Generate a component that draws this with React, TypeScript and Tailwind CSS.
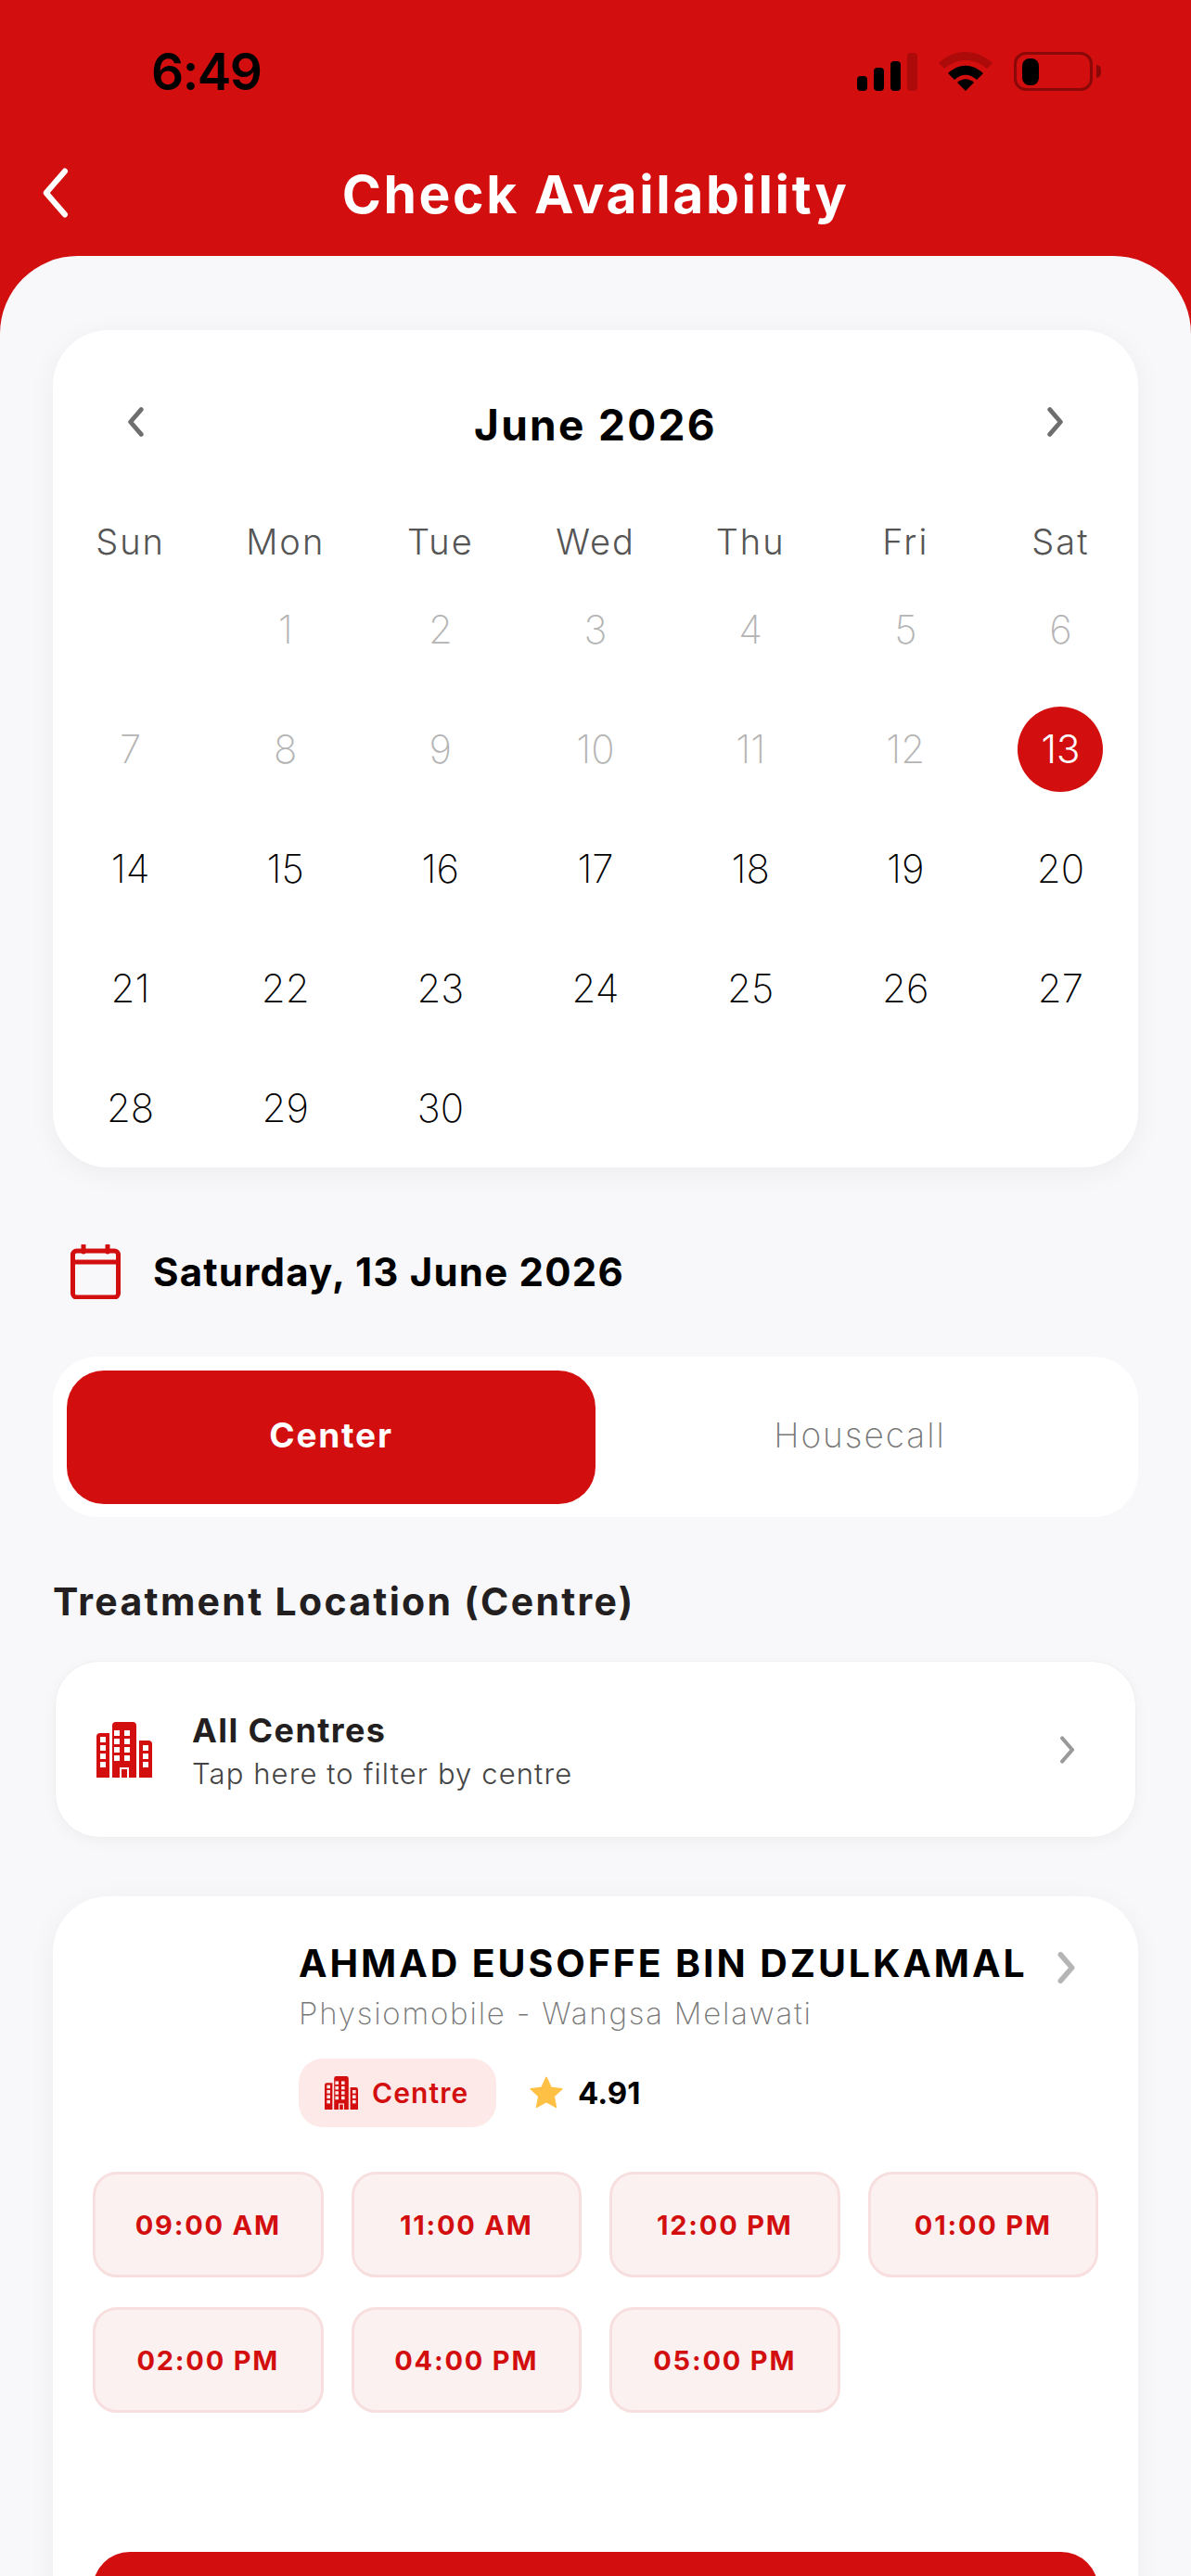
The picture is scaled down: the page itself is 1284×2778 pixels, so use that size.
import React from 'react';

const weekDays = ['Sun', 'Mon', 'Tue', 'Wed', 'Thu', 'Fri', 'Sat'];
const slots = ['09:00 AM', '11:00 AM', '12:00 PM', '01:00 PM', '02:00 PM', '04:00 PM', '05:00 PM'];
const days = [0, ...Array.from({ length: 30 }, (_, i) => i + 1)];

const Chevron = ({ left, weight = 4, className }: { left?: boolean; weight?: number; className: string }) => (
  <svg viewBox="0 0 20 36" fill="none" className={className}>
    <path
      d={left ? 'M17 3 L4 18 L17 33' : 'M3 3 L16 18 L3 33'}
      stroke="currentColor"
      strokeWidth={weight}
      strokeLinecap="round"
      strokeLinejoin="round"
    />
  </svg>
);

const Building = ({ className, hole }: { className: string; hole: string }) => {
  const windows: [number, number][] = [];
  [21, 32].forEach((x) => [9, 18, 27, 36].forEach((y) => windows.push([x, y])));
  [16, 25, 34, 43].forEach((y) => windows.push([6, y]));
  [25, 34, 43].forEach((y) => windows.push([52, y]));
  return (
    <svg viewBox="0 0 60 60" className={className}>
      <path d="M0 16 Q0 12 4 12 H14 V60 H0 Z" fill="currentColor" />
      <path d="M17 4 Q17 0 21 0 H39 Q43 0 43 4 V60 H17 Z" fill="currentColor" />
      <path d="M46 20 H56 Q60 20 60 24 V60 H46 Z" fill="currentColor" />
      {windows.map(([x, y]) => (
        <rect key={`${x}-${y}`} x={x - 2} y={y} width="6" height="6" className={hole} />
      ))}
      <rect x="25" y="49" width="10" height="11" className={hole} />
      <rect x="27" y="51" width="6" height="9" fill="currentColor" />
    </svg>
  );
};

const StatusBar = () => (
  <div className="flex h-[154px] items-center justify-between pl-[163px] pr-[97px]">
    <span className="text-[55px] font-semibold leading-none text-black tracking-[-1.5px]">6:49</span>
    <div className="flex items-center">
      <svg viewBox="0 0 65 41" className="h-[41px] w-[65px]">
        <rect x="0" y="25" width="11" height="16" rx="4" fill="#000" />
        <rect x="18" y="16" width="11" height="25" rx="4" fill="#000" />
        <rect x="36" y="9" width="11" height="32" rx="4" fill="#000" />
        <rect x="54" y="0" width="11" height="41" rx="4" fill="#ad0a0a" />
      </svg>
      <svg viewBox="0 0 58 42" className="ml-[23px] h-[42px] w-[58px]">
        <path d="M0 12 C17 -4 41 -4 58 12 L52 18 C38 6 20 6 6 18 Z" fill="#ad0a0a" />
        <path d="M10 23 C22 12 36 12 48 23 L41 30 C33 23 25 23 17 30 Z" fill="#000" />
        <path d="M20 33 C26 28 32 28 38 33 L29 42 Z" fill="#000" />
      </svg>
      <div className="ml-[23px] flex items-center">
        <div className="flex h-[42px] w-[85px] items-center rounded-[13px] border-[3px] border-[#8a0808] pl-[6px]">
          <div className="h-[29px] w-[18px] rounded-[8px] bg-black" />
        </div>
        <div className="ml-[4px] h-[14px] w-[5px] rounded-r-full bg-[#8a0808]" />
      </div>
    </div>
  </div>
);

export default function App() {
  return (
    <div className="h-[2778px] w-[1284px] overflow-hidden bg-[#d20e0e] font-['Inter',sans-serif]">
      <StatusBar />

      <header className="relative flex h-[122px] items-start justify-center pt-[27px]">
        <Chevron left className="absolute left-[43px] top-[26px] h-[56px] w-[32px] text-white" />
        <h1 className="text-[57px] font-bold leading-none tracking-[2.6px] text-white">Check Availability</h1>
      </header>

      <main className="h-[2502px] rounded-t-[84px] bg-[#f8f8fb] px-[57px] pt-[80px]">
        <section className="rounded-[60px] bg-white shadow-[0_6px_30px_rgba(0,0,0,0.05)]">
          <div className="flex h-[198px] items-center justify-between pl-[79px] pr-[79px] pt-[6px]">
            <Chevron left weight={5.5} className="mb-[6px] h-[32px] w-[20px] text-[#6e6e6e]" />
            <span className="text-[46px] font-bold leading-none tracking-[2.3px] text-black">June 2026</span>
            <Chevron weight={5.5} className="mb-[6px] h-[32px] w-[20px] text-[#6e6e6e]" />
          </div>
          <div className="grid grid-cols-7">
            {weekDays.map((d) => (
              <div key={d} className="flex h-[60px] items-center justify-center text-[38px] font-light tracking-[2px] text-[#555555]">
                {d}
              </div>
            ))}
          </div>
          <div className="grid grid-cols-7 auto-rows-[129px]">
            {days.map((d, i) => (
              <div key={i} className="flex items-center justify-center">
                {d === 13 ? (
                  <span className="flex h-[92px] w-[92px] items-center justify-center rounded-full bg-[#d20e0e] text-[42px] font-light text-white">
                    13
                  </span>
                ) : d > 0 ? (
                  <span className={`text-[42px] font-extralight ${d < 13 ? 'text-[#b4b4b4]' : 'text-black'}`}>{d}</span>
                ) : null}
              </div>
            ))}
          </div>
        </section>

        <div className="mt-[83px] flex h-[59px] items-center pl-[19px]">
          <svg viewBox="0 0 54 59" fill="none" className="h-[59px] w-[54px] text-[#d20e0e]">
            <rect x="2.5" y="7" width="49" height="50" rx="4" stroke="currentColor" strokeWidth="5" />
            <path d="M2 19 H52" stroke="currentColor" strokeWidth="5" />
            <path d="M14 1 V8 M40 1 V8" stroke="currentColor" strokeWidth="5" strokeLinecap="round" />
          </svg>
          <span className="ml-[35px] text-[42px] font-bold leading-none tracking-[1.2px] text-black">Saturday, 13 June 2026</span>
        </div>

        <div className="mt-[62px] flex h-[173px] items-center rounded-[48px] bg-white px-[15px]">
          <div className="flex h-[144px] w-[570px] items-center justify-center rounded-[40px] bg-[#d20e0e] pb-[3px] text-[37px] font-bold tracking-[1.8px] text-white">
            Center
          </div>
          <div className="flex flex-1 items-center justify-center pb-[3px] text-[37px] font-extralight tracking-[2px] text-[#777777]">Housecall</div>
        </div>

        <h2 className="mt-[66px] flex h-[50px] items-center text-[41px] font-bold leading-none tracking-[2.3px] text-[#231f20]">
          Treatment Location (Centre)
        </h2>

        <div className="mx-[2px] mt-[39px] flex h-[191px] items-center rounded-[48px] border border-[#efefef] bg-white pl-[44px] pr-[64px] shadow-[0_4px_16px_rgba(0,0,0,0.04)]">
          <Building className="h-[60px] w-[60px] text-[#d20e0e]" hole="fill-white" />
          <div className="ml-[43px] flex-1 pt-[3px]">
            <div className="text-[36px] font-bold leading-[44px] tracking-[1.4px] text-[#231f20]">All Centres</div>
            <div className="mt-[5px] text-[31px] font-light leading-[40px] tracking-[1.1px] text-[#444444]">Tap here to filter by centre</div>
          </div>
          <Chevron weight={5} className="h-[30px] w-[18px] text-[#9a9a9a]" />
        </div>

        <section className="mt-[63px] rounded-t-[60px] bg-white px-[43px] pt-[42px] shadow-[0_6px_30px_rgba(0,0,0,0.05)]">
          <div className="pl-[222px]">
            <div className="flex h-[60px] items-center justify-between">
              <span className="text-[41px] font-bold leading-none tracking-[2.9px] text-black">AHMAD EUSOFFE BIN DZULKAMAL</span>
              <Chevron weight={6} className="mr-[22px] mt-[10px] h-[34px] w-[24px] text-[#b5b5b5]" />
            </div>
            <div className="flex h-[50px] items-center text-[33px] font-extralight tracking-[1.8px] text-[#777777]">Physiomobile - Wangsa Melawati</div>
            <div className="mt-[23px] flex items-center">
              <div className="flex h-[74px] w-[213px] items-center rounded-[26px] bg-[#fee9e9] pl-[28px]">
                <Building className="h-[36px] w-[36px] text-[#d20e0e]" hole="fill-[#fee9e9]" />
                <span className="ml-[15px] text-[30px] font-semibold tracking-[1.1px] text-[#d20e0e]">Centre</span>
              </div>
              <svg viewBox="0 0 24 24" className="ml-[35px] h-[38px] w-[38px]">
                <path
                  d="M12 1.5l3.2 6.9 7.4.9-5.5 5 1.5 7.4L12 18.1l-6.6 3.6 1.5-7.4-5.5-5 7.4-.9z"
                  fill="#ffc145"
                  stroke="#ffc145"
                  strokeLinejoin="round"
                />
              </svg>
              <span className="ml-[15px] text-[33px] font-bold leading-none text-black">4.91</span>
            </div>
          </div>

          <div className="mt-[48px] grid grid-cols-4 gap-x-[30px] gap-y-[32px]">
            {slots.map((s) => (
              <div
                key={s}
                className="flex h-[114px] items-center justify-center rounded-[26px] border-[3px] border-[#f8dfdf] bg-[#fcf1f1] pt-[2px] text-[29px] font-bold tracking-[1.8px] text-[#d20e0e]"
              >
                {s}
              </div>
            ))}
          </div>

          <div className="mt-[150px] h-[120px] rounded-t-[40px] bg-[#d20e0e]" />
        </section>
      </main>
    </div>
  );
}
